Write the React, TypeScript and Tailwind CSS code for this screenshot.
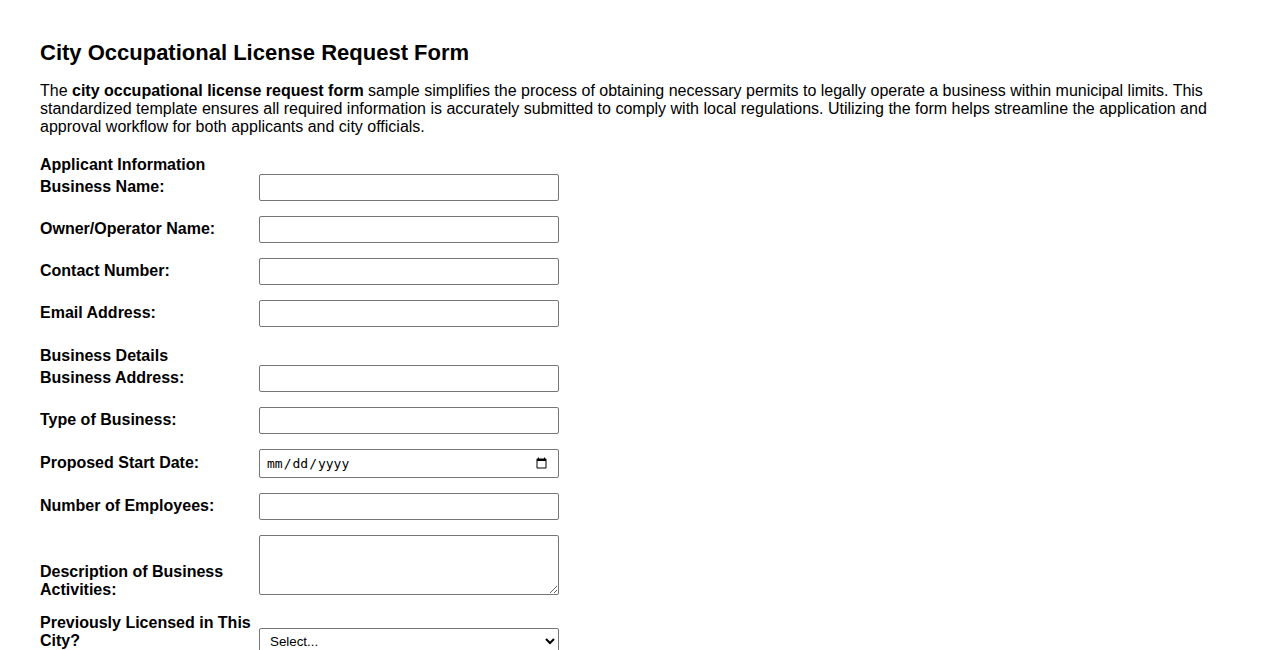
import React from "react";

const inputCls =
  "inline-block align-baseline w-[300px] h-[27px] border border-[#767676] rounded-[2px] bg-white px-[4px] text-[13.33px]";

function Row({ label, children }: { label: string; children: React.ReactNode }) {
  return (
    <div className="mb-[15px]">
      <label className="inline-block align-baseline w-[219px] font-bold">{label}</label>
      {children}
    </div>
  );
}

export default function App() {
  return (
    <div
      className="bg-white text-black text-[16px] px-10 pt-[40px] pb-10 min-h-[650px]"
      style={{ fontFamily: '"Liberation Sans", Arial, sans-serif', lineHeight: "normal" }}
    >
      <h2 className="text-[22px] font-bold m-0">City Occupational License Request Form</h2>
      <p className="mt-[16px] mb-0">
        The <strong>city occupational license request form</strong> sample simplifies the process of
        obtaining necessary permits to legally operate a business within municipal limits. This
        standardized template ensures all required information is accurately submitted to comply with
        local regulations. Utilizing the form helps streamline the application and approval workflow for
        both applicants and city officials.
      </p>
      <form>
        <h3 className="mt-[20px] mb-0 font-bold text-[16px]">Applicant Information</h3>
        <Row label="Business Name:">
          <input type="text" className={inputCls} />
        </Row>
        <Row label="Owner/Operator Name:">
          <input type="text" className={inputCls} />
        </Row>
        <Row label="Contact Number:">
          <input type="tel" className={inputCls} />
        </Row>
        <Row label="Email Address:">
          <input type="email" className={inputCls} />
        </Row>
        <h3 className="mt-[20px] mb-0 font-bold text-[16px]">Business Details</h3>
        <Row label="Business Address:">
          <input type="text" className={inputCls} />
        </Row>
        <Row label="Type of Business:">
          <input type="text" className={inputCls} />
        </Row>
        <Row label="Proposed Start Date:">
          <input
            type="date"
            className="inline-block align-baseline w-[300px] h-[29px] border border-[#767676] rounded-[2px] bg-white pl-[6px] pr-[8px] text-[13px]"
            style={{ fontFamily: '"DejaVu Sans Mono", monospace' }}
          />
        </Row>
        <Row label="Number of Employees:">
          <input type="number" className={inputCls} />
        </Row>
        <Row label="Description of Business Activities:">
          <textarea className="inline-block align-baseline w-[300px] h-[60px] border border-[#767676] rounded-[2px] bg-white text-[13.33px] p-[2px]" />
        </Row>
        <Row label="Previously Licensed in This City?">
          <select className="inline-block align-baseline w-[300px] h-[27px] border border-[#767676] rounded-[2px] bg-white pl-[6px] text-[13.33px]">
            <option>Select...</option>
            <option>Yes</option>
            <option>No</option>
          </select>
        </Row>
      </form>
    </div>
  );
}
